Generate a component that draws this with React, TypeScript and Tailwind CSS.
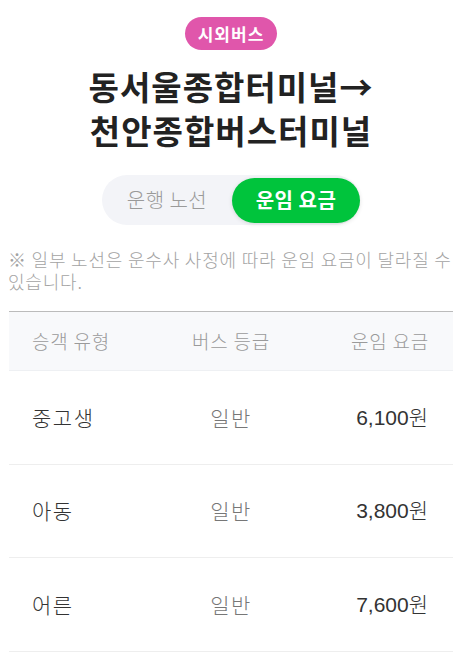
const kr = { fontFamily: '"Noto Sans CJK KR", "Noto Sans", sans-serif' };
const num = { fontFamily: '"Liberation Sans", "Noto Sans CJK KR", sans-serif' };

const rows = [
  { type: "중고생", grade: "일반", fare: "6,100원" },
  { type: "아동", grade: "일반", fare: "3,800원" },
  { type: "어른", grade: "일반", fare: "7,600원" },
];

export default function App() {
  return (
    <main className="w-[462px] bg-white pb-4" style={kr}>
      <div className="flex flex-col items-center pt-[17px]">
        <span className="flex h-[33px] items-center rounded-full bg-[#e056ab] px-[13px] text-[17px] font-bold tracking-[1px] text-white">
          시외버스
        </span>
        <h1 className="mt-[14px] text-center text-[33px] font-bold leading-[44px] tracking-[1px] text-[#222]">
          동서울종합터미널→
          <br />
          천안종합버스터미널
        </h1>
        <div className="mt-[23px] flex h-[50px] w-[258px] items-center rounded-full bg-[#f3f4f8]">
          <button className="flex-1 text-[20px] font-light tracking-[0.5px] text-[#9a9a9a]">운행 노선</button>
          <button className="h-[45px] w-[128px] rounded-full bg-[#00c43c] text-[20px] font-bold tracking-[0.5px] text-white shadow-[0_1px_4px_rgba(0,0,0,0.12)]">
            운임 요금
          </button>
        </div>
      </div>

      <p className="mt-[23px] px-[8px] text-[18px] font-light leading-[22px] tracking-[0.8px] text-[#a3a3a3]">
        ※ 일부 노선은 운수사 사정에 따라 운임 요금이 달라질 수 있습니다.
      </p>

      <div className="mx-[9px] mt-[19px] border-t border-[#bbb]">
        <div className="grid h-[59px] grid-cols-3 items-center border-b border-[#eef0f3] bg-[#f8f9fb] text-[19px] font-light tracking-[0.8px] text-[#9a9a9a]">
          <span className="pl-[23px]">승객 유형</span>
          <span className="text-center">버스 등급</span>
          <span className="pr-[24px] text-right">운임 요금</span>
        </div>
        {rows.map((r) => (
          <div key={r.type} className="grid h-[93.5px] grid-cols-3 items-center border-b border-[#eee] text-[21px] font-light">
            <span className="pl-[23px] tracking-[1.5px] text-[#333]">{r.type}</span>
            <span className="text-center tracking-[1.5px] text-[#777]">{r.grade}</span>
            <span className="pr-[25px] text-right text-[#333]" style={num}>
              {r.fare}
            </span>
          </div>
        ))}
      </div>
    </main>
  );
}
